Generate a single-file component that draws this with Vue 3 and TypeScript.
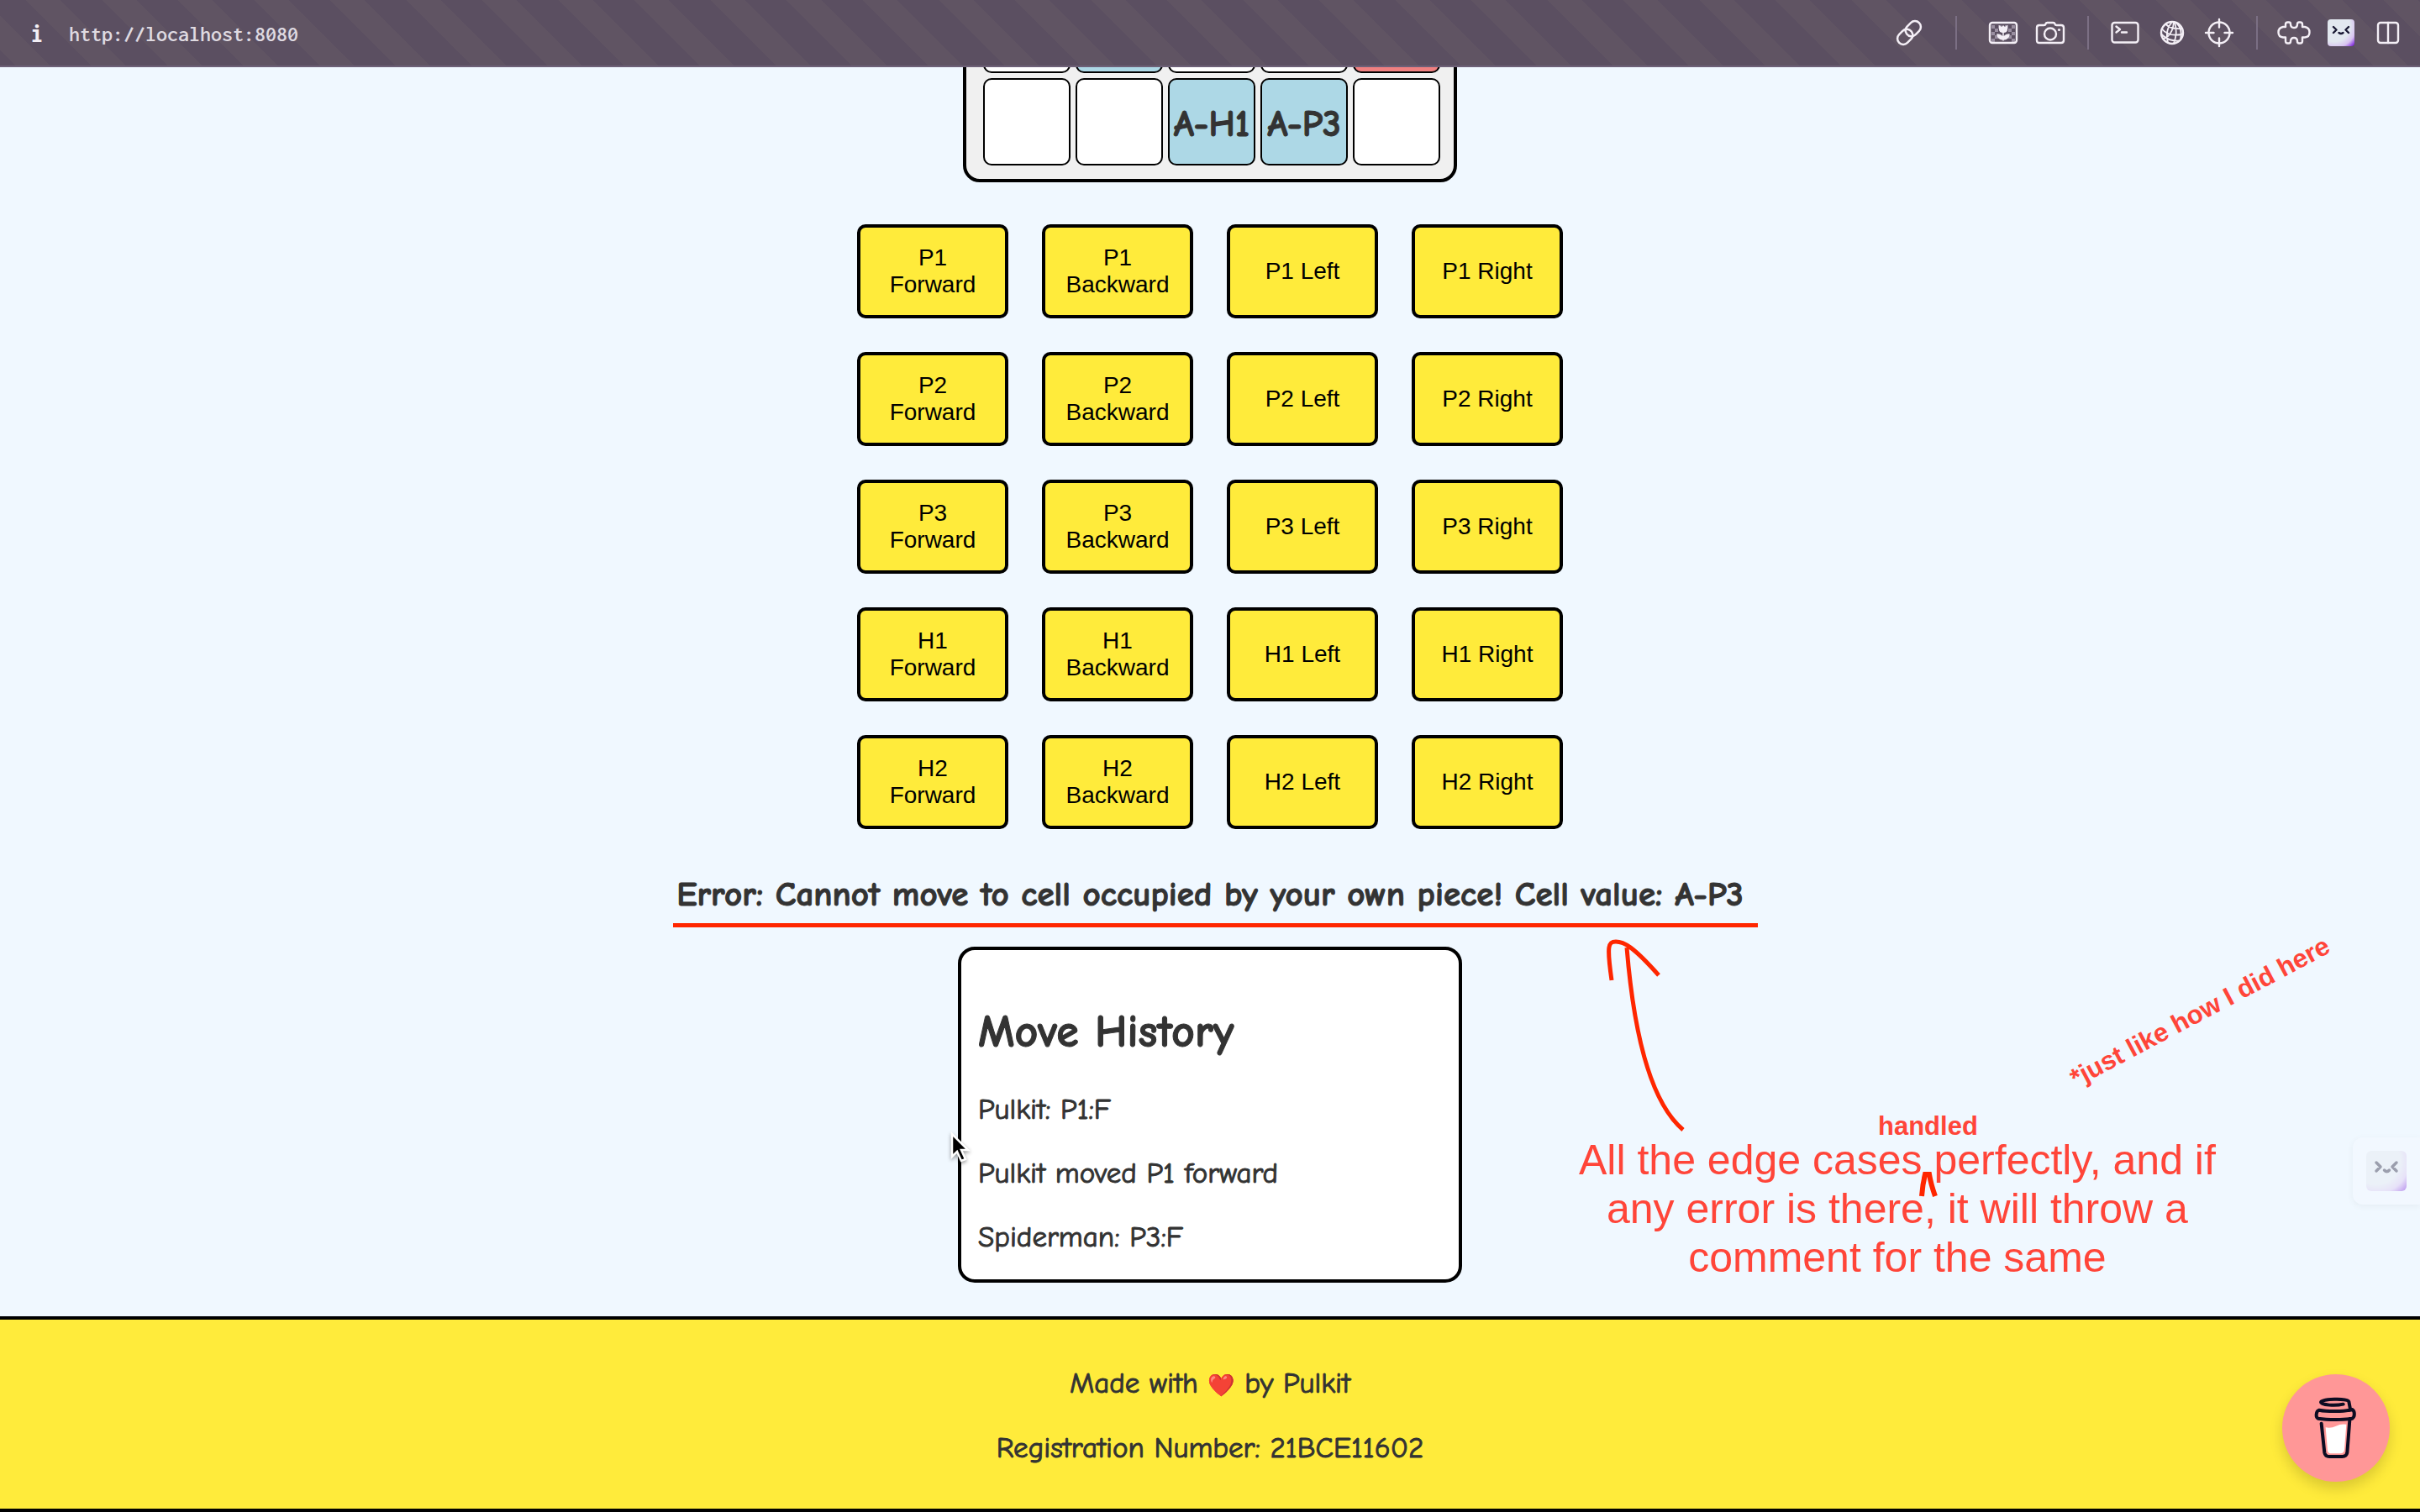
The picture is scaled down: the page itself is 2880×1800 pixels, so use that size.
<script setup lang="ts">
interface Cell {
  label: string
  team: 'a' | 'b' | ''
}

const board: Cell[][] = [
  [
    { label: '', team: '' },
    { label: '', team: 'a' },
    { label: '', team: '' },
    { label: '', team: '' },
    { label: '', team: 'b' },
  ],
  [
    { label: '', team: '' },
    { label: '', team: '' },
    { label: 'A-H1', team: 'a' },
    { label: 'A-P3', team: 'a' },
    { label: '', team: '' },
  ],
]

const pieces = ['P1', 'P2', 'P3', 'H1', 'H2']
const directions = ['Forward', 'Backward', 'Left', 'Right']

const history = ['Pulkit: P1:F', 'Pulkit moved P1 forward', 'Spiderman: P3:F']
</script>

<template>
  <div class="window">
    <header class="topbar">
      <button class="site-info" type="button" aria-label="Site information">i</button>
      <a class="url" href="http://localhost:8080">http://localhost:8080</a>

      <nav class="tools" aria-label="Browser tools">
        <button type="button" class="tool" aria-label="Copy link">
          <svg viewBox="0 0 36 36" class="icon">
            <g transform="translate(1.2 1.2) scale(1.4)" stroke-width="1.8">
              <path d="M10 13a5 5 0 0 0 7.54.54l3-3a5 5 0 0 0-7.07-7.07l-3.2 3.2a5 5 0 0 0-.5 6" />
              <path d="M14 11a5 5 0 0 0-7.54-.54l-3 3a5 5 0 0 0 7.07 7.07l3.2-3.2a5 5 0 0 0 .5-6" />
            </g>
          </svg>
        </button>
        <span class="sep wide"></span>
        <button type="button" class="tool" aria-label="Images">
          <svg viewBox="0 0 36 36" class="icon">
            <g fill="#9a8fa1" stroke="none">
              <path d="M4 9h4v4H4zM12 9h4v4h-4zM20 9h4v4h-4zM28 9h4v4h-4zM8 13h4v4H8zM24 13h4v4h-4zM4 17h4v4H4zM28 17h4v4h-4zM8 21h4v4H8zM24 21h4v4h-4zM4 25h4v4H4zM28 25h4v4h-4z" />
            </g>
            <rect x="2" y="6" width="32" height="24" rx="3" />
            <path d="M13 9l3 2 2-2 2 2 3-2v5q0 4-5 4t-5-4z" fill="#f4eff6" stroke="none" />
            <path d="M18 17v10M18 26q-6 0-7-6 6 0 7 6q1-6 7-6-1 6-7 6" fill="#f4eff6" stroke-width="1.5" />
          </svg>
        </button>
        <button type="button" class="tool" aria-label="Screenshot">
          <svg viewBox="0 0 36 36" class="icon">
            <path d="M2 12q0-3 3-3h5.500q1.500 0 2-1.500t2-1.500h7q1.500 0 2 1.500t2 1.500H31q3 0 3 3v15q0 3-3 3H5q-3 0-3-3z" />
            <circle cx="18" cy="19.500" r="7" />
            <circle cx="28.500" cy="14.500" r="1.600" fill="#f4eff6" stroke="none" />
          </svg>
        </button>
        <span class="sep"></span>
        <button type="button" class="tool" aria-label="Console">
          <svg viewBox="0 0 36 36" class="icon">
            <rect x="2.500" y="6" width="31" height="23.500" rx="3" />
            <path d="M7.500 10.500l4.500 3.500-4.500 3.500M14 17.500h6" />
          </svg>
        </button>
        <button type="button" class="tool" aria-label="Network">
          <svg viewBox="0 0 36 36" class="icon">
            <circle cx="18" cy="18" r="13" />
            <path d="M18 5q-9 10-5 25M20 5q-1 12-7 17-3 3-6 3M21 5.500q4 12-1 25M23 6q8 8 5 20M10.500 8q6 6 19 5M6 13.500q8 10 25 6M5.500 20q8 8 20 7.500" stroke-width="1.800" />
          </svg>
        </button>
        <button type="button" class="tool" aria-label="Inspect">
          <svg viewBox="0 0 36 36" class="icon">
            <circle cx="18" cy="18" r="12.500" />
            <path d="M18 2v9.500M18 24.500v9.500M2 18h9.500M24.500 18H34" />
          </svg>
        </button>
        <span class="sep"></span>
        <button type="button" class="tool" aria-label="Extensions">
          <svg viewBox="0 0 36 36" class="icon">
            <path d="M8 10V8q0-2.500 2.500-2.500h1.500q2 0 2 2.200 0 4.300 4 4.300t4-4.300q0-2.200 2-2.200h1.500q2.500 0 2.500 2.500v3h3q5.500 1 5.500 6.500T31 23.500h-3V28q0 2.500-2.500 2.500H24q-2 0-2-2.200 0-4.300-4-4.300t-4 4.300q0 2.200-2 2.200h-1.500Q8 30.500 8 28v-4.500H5q-5.500-.5-5.500-6T5 11h3z" />
          </svg>
        </button>
        <button type="button" class="tool" aria-label="Assistant">
          <span class="face">
            <svg viewBox="0 0 32 32">
              <path d="M7 9l3.500 3.500L7 16M25 9l-3.500 3.500L25 16M13.500 16q2.500 2 5 0" />
            </svg>
          </span>
        </button>
        <button type="button" class="tool" aria-label="Split view">
          <svg viewBox="0 0 36 36" class="icon">
            <rect x="6" y="6" width="24" height="24" rx="3" />
            <path d="M18 6v24" />
          </svg>
        </button>
      </nav>
    </header>

    <main class="page">
      <section class="board" aria-label="Board">
        <div v-for="(row, r) in board" :key="r" class="board-row">
          <div v-for="(cell, c) in row" :key="c" class="cell" :class="cell.team && `team-${cell.team}`">
            {{ cell.label }}
          </div>
        </div>
      </section>

      <section class="controls" aria-label="Moves">
        <template v-for="piece in pieces" :key="piece">
          <button v-for="dir in directions" :key="dir" type="button" class="move">{{ piece }} {{ dir }}</button>
        </template>
      </section>

      <p class="error">
        Error: Cannot move to cell occupied by your own piece! Cell value: A-P3
      </p>

      <section class="history">
        <h2>Move History</h2>
        <p v-for="line in history" :key="line">{{ line }}</p>
      </section>

      <!-- hand-drawn notes over the page -->
      <div class="notes">
        <span class="underline"></span>
        <svg class="arrow" viewBox="0 0 100 240">
          <path d="M18 47C12 5 14 1 23 1S43 6 74 41M36 8Q50 180 103 225" />
        </svg>
        <p class="note">
          All the edge cases perfectly, and if<br />any error is there, it will throw a<br />comment for the same
        </p>
        <span class="note-small handled">handled</span>
        <svg class="caret" viewBox="0 0 24 34">
          <path d="M5 30Q6 16 9 4h5q2 12 7 26" />
        </svg>
        <span class="note-small aside">*just like how I did here</span>
        <svg class="cursor" viewBox="0 0 28 40">
          <path d="M4 3v27l6-6 5 11 5-2-5-11h8z" />
        </svg>
      </div>

      <button type="button" class="side-tab" aria-label="Open assistant">
        <span class="face big">
          <svg viewBox="0 0 48 48">
            <path d="M12 14l5 5-5 5M36 14l-5 5 5 5M21.500 23q3 3.500 6 0" />
          </svg>
        </span>
      </button>
    </main>

    <footer class="footer">
      <p>Made with <span class="heart">❤️</span> by Pulkit</p>
      <p>Registration Number: 21BCE11602</p>
      <button type="button" class="coffee" aria-label="Buy me a coffee">
        <svg viewBox="108 108 384 384">
          <path d="M263 298Q283 302 300 293T337 287L330 378Q328 391 316 391H284Q271 391 270 380Z" fill="#fff" />
          <g fill="none" stroke="#0d0c22" stroke-width="12" stroke-linecap="round" stroke-linejoin="round">
            <path d="M326 215C300 221 246 219 246 208C246 196 342 192 346 206L351 232" />
            <path d="M240 236C228 240 227 262 236 266C270 271 330 271 358 266C368 260 368 240 358 234C330 242 270 242 240 236Z" />
            <path d="M248 284L259 388Q262 402 276 402H322Q338 402 340 388L349 272" />
          </g>
        </svg>
      </button>
    </footer>
  </div>
</template>

<style>
body {
  background: #f0f8ff;
}
</style>

<style scoped>
.window {
  position: relative;
  overflow: hidden;
  font-family: "Comic Neue", "Comic Sans MS", "Open Sans", sans-serif;
  color: #333;
}

button {
  padding: 0;
  border: 0;
  background: none;
  font: inherit;
  color: inherit;
}

/* browser bar */
.topbar {
  position: relative;
  z-index: 2;
  display: flex;
  align-items: center;
  box-sizing: border-box;
  height: 80px;
  padding: 0 10px 0 32px;
  border-bottom: 2px solid #6d6077;
  background: repeating-linear-gradient(45deg, #5b4f61 0 13px, #605463 13px 42px, #5b4f61 42px 64px);
  font-family: Inconsolata, "DejaVu Sans Mono", monospace;
  font-size: 26px;
}

.site-info {
  width: 24px;
  color: #f4eff6;
  font-size: 32px;
  font-weight: 700;
}

.url {
  margin-left: 26px;
  padding-top: 2px;
  color: #dfdae1;
  font-weight: 600;
  text-decoration: none;
}

.tools {
  display: flex;
  align-items: center;
  margin-left: auto;
}

.tool {
  display: flex;
  align-items: center;
  justify-content: center;
  width: 56px;
  height: 56px;
}

.icon {
  width: 36px;
  height: 36px;
  overflow: visible;
  fill: none;
  stroke: #f4eff6;
  stroke-width: 2.4;
  stroke-linecap: round;
  stroke-linejoin: round;
}

.sep {
  width: 2px;
  height: 40px;
  margin: 0 15px 0 16px;
  background: #7b6f84;
}

.sep.wide {
  margin: 0 27px;
}

.face {
  display: block;
  width: 32px;
  height: 32px;
  border-radius: 4px;
  background: radial-gradient(circle at 25% 25%, #e2e8f0 55%, #d8c2f0 76%, #7c22dc 96%);
}

.face svg {
  display: block;
  fill: none;
  stroke: #1a1a35;
  stroke-width: 2.4;
  stroke-linecap: round;
  stroke-linejoin: round;
}

/* page */
.page {
  position: relative;
  display: flex;
  flex-direction: column;
  align-items: center;
}

.board,
.error,
.history,
.footer p {
  -webkit-text-stroke: 1px #333;
}

.board {
  display: flex;
  flex-direction: column;
  gap: 6px;
  margin-top: -121px;
  padding: 20px 16px 16px 20px;
  border: 4px solid #000;
  border-radius: 20px;
  background: #f0f0f0;
}

.board-row {
  display: flex;
  gap: 6px;
}

.cell {
  display: flex;
  align-items: center;
  justify-content: center;
  box-sizing: border-box;
  width: 104px;
  height: 104px;
  padding-top: 4px;
  border: 2px solid #000;
  border-radius: 10px;
  background: #fff;
  font-size: 44px;
  font-weight: 700;
  white-space: nowrap;
}

.team-a {
  background: #add8e6;
}

.team-b {
  background: #f08080;
}

.controls {
  display: grid;
  grid-template-columns: repeat(4, 180px);
  gap: 40px;
  margin-top: 50px;
}

.move {
  height: 112px;
  padding: 0 20px;
  border: 4px solid #000;
  border-radius: 10px;
  background: #ffeb3b;
  color: #000;
  font: 28px/32px "Liberation Sans", Arial, sans-serif;
}

.error {
  margin: 50px 0 34px;
  font-size: 41px;
  line-height: 56px;
  font-weight: 700;
}

.history {
  box-sizing: border-box;
  width: 600px;
  height: 400px;
  margin-bottom: 40px;
  padding: 64px 20px 0;
  border: 4px solid #000;
  border-radius: 20px;
  background: #fff;
}

.history h2 {
  margin: 0 0 36px;
  font-size: 54px;
  line-height: 68px;
}

.history p {
  margin: 0 0 32px;
  font-size: 35px;
  line-height: 44px;
}

/* notes */
.notes {
  position: absolute;
  top: 0;
  left: 50%;
  width: 0;
  height: 0;
  color: #ff4539;
  font-family: "Liberation Sans", Arial, sans-serif;
  white-space: nowrap;
}

.notes > * {
  position: absolute;
}

.underline {
  top: 1019px;
  left: -639px;
  width: 1291px;
  height: 5px;
  background: #ff2600;
}

.arrow {
  top: 1040px;
  left: 460px;
  width: 100px;
  height: 240px;
}

.arrow,
.caret {
  overflow: visible;
  fill: none;
  stroke: #ff2600;
  stroke-width: 5;
}

.note {
  top: 1272px;
  left: 439px;
  margin: 0;
  font-size: 50px;
  line-height: 58px;
  text-align: center;
}

.note-small {
  font-size: 31px;
  line-height: 34px;
  font-weight: 700;
}

.handled {
  top: 1244px;
  left: 795px;
}

.caret {
  top: 1314px;
  left: 842px;
  width: 24px;
  height: 34px;
  stroke-width: 6;
}

.aside {
  top: 1108px;
  left: 1006px;
  transform: rotate(-28deg);
}

.cursor {
  top: 1267px;
  left: -311px;
  width: 28px;
  height: 40px;
  fill: #000;
  stroke: #fff;
  stroke-width: 2.5;
  filter: drop-shadow(0 2px 2px rgb(0 0 0 / 40%));
}

.side-tab {
  position: absolute;
  top: 1274px;
  right: 0;
  display: flex;
  align-items: center;
  box-sizing: border-box;
  width: 80px;
  height: 80px;
  padding-left: 16px;
  border-radius: 12px 0 0 12px;
  box-shadow: 0 2px 8px rgb(0 0 0 / 5%);
  background: #f2f8ff;
}

.face.big {
  width: 48px;
  height: 48px;
  border-radius: 6px;
  opacity: 0.4;
}

.face.big svg {
  stroke-width: 3.5;
}

/* footer */
.footer {
  position: relative;
  display: flex;
  flex-direction: column;
  align-items: center;
  gap: 32px;
  padding: 53px 0 50px;
  border-top: 4px solid #000;
  border-bottom: 4px solid #000;
  background: #ffeb3b;
}

.footer p {
  margin: 0;
  font-size: 35px;
  line-height: 45px;
}

.heart {
  font-size: 26px;
  line-height: 26px;
}

.coffee {
  position: absolute;
  right: 36px;
  bottom: 32px;
  width: 128px;
  height: 128px;
  border-radius: 50%;
  background: #ff9797;
  box-shadow: 0 8px 16px rgb(0 0 0 / 15%);
}

.coffee svg {
  display: block;
}
</style>
